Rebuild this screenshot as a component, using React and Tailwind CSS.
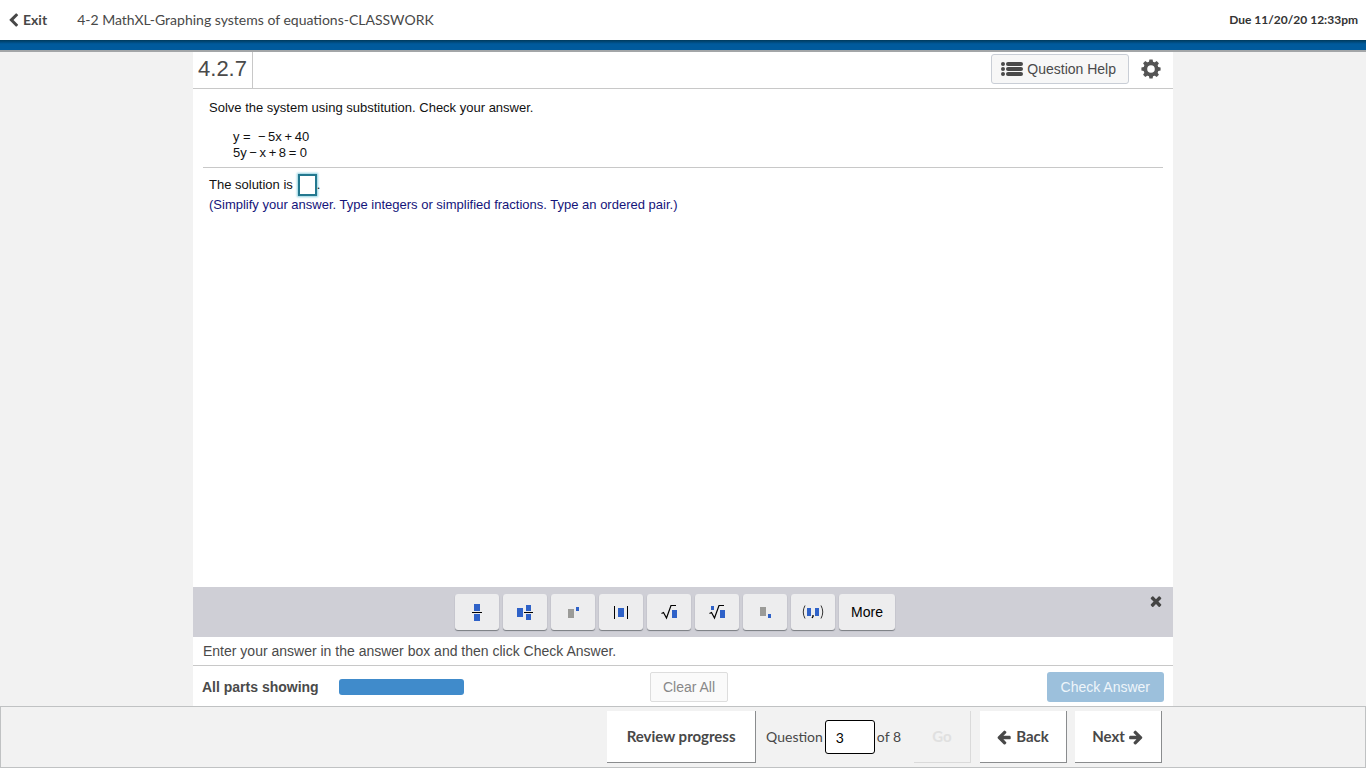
const BLUE = '#2f62c8'
const GREY = '#9b9b98'

const ICON_PATHS = {
  chevronLeft: 'M1427 301l-531 531 531 531q19 19 19 45t-19 45l-166 166q-19 19-45 19t-45-19l-742-742q-19-19-19-45t19-45l742-742q19-19 45-19t45 19l166 166q19 19 19 45t-19 45z',
  arrowLeft: 'M1536 896v128q0 53-32.5 90.5t-84.5 37.5h-704l293 294q38 36 38 90t-38 90l-75 76q-37 37-90 37-52 0-91-37l-651-652q-37-37-37-90 0-52 37-91l651-650q38-38 91-38 52 0 90 38l75 74q38 38 38 91t-38 91l-293 293h704q52 0 84.5 37.5t32.5 90.5z',
  arrowRight: 'M1600 960q0 54-37 91l-651 651q-39 37-91 37-51 0-90-37l-75-75q-38-38-38-91t38-91l293-293h-704q-52 0-84.5-37.5t-32.5-90.5v-128q0-53 32.5-90.5t84.5-37.5h704l-293-294q-38-36-38-90t38-90l75-75q38-38 90-38 53 0 91 38l651 651q37 35 37 90z',
  times: 'M1490 1322q0 40-28 68l-136 136q-28 28-68 28t-68-28l-294-294-294 294q-28 28-68 28t-68-28l-136-136q-28-28-28-68t28-68l294-294-294-294q-28-28-28-68t28-68l136-136q28-28 68-28t68 28l294 294 294-294q28-28 68-28t68 28l136 136q28 28 28 68t-28 68l-294 294 294 294q28 28 28 68z',
}

const Icon = ({ name, className }) => (
  <svg viewBox="0 0 1792 1792" fill="currentColor" className={className} aria-hidden="true">
    <path d={ICON_PATHS[name]} />
  </svg>
)

const ListIcon = () => (
  <svg viewBox="0 0 22 16" className="w-[22px] h-4" fill="currentColor" aria-hidden="true">
    {[1, 6, 11].map((y) => (
      <g key={y}>
        <circle cx="2" cy={y + 2} r="2" />
        <rect x="5" y={y} width="17" height="4" rx="2" />
      </g>
    ))}
  </svg>
)

const GearIcon = () => (
  <svg viewBox="0 0 20 20" className="w-5 h-5" aria-hidden="true">
    <circle cx="10" cy="10" r="5.7" fill="none" stroke="currentColor" strokeWidth="3.8" />
    {[0, 45, 90, 135, 180, 225, 270, 315].map((angle) => (
      <path key={angle} d="M7.8 3.8L8.4 0.4H11.6L12.2 3.8Z" fill="currentColor" transform={`rotate(${angle} 10 10)`} />
    ))}
  </svg>
)

const MATH_TOOLS = [
  {
    label: 'Fraction',
    art: (
      <>
        <rect x="9" y="4" width="6" height="7" fill={BLUE} />
        <rect x="9" y="14" width="6" height="7" fill={BLUE} />
        <path d="M7 12.5H17" stroke="#000" />
      </>
    ),
  },
  {
    label: 'Mixed number',
    art: (
      <>
        <rect x="4" y="8" width="6" height="9" fill={BLUE} />
        <rect x="13" y="5" width="5" height="6" fill={BLUE} />
        <rect x="13" y="14" width="5" height="6" fill={BLUE} />
        <path d="M11 12.5H20" stroke="#000" />
      </>
    ),
  },
  {
    label: 'Exponent',
    art: (
      <>
        <rect x="7" y="9" width="6" height="9" fill={GREY} />
        <rect x="15" y="7" width="3" height="4" fill={BLUE} />
      </>
    ),
  },
  {
    label: 'Absolute value',
    art: (
      <>
        <rect x="9" y="8" width="6" height="9" fill={BLUE} />
        <path d="M5.5 6V19M18.5 6V19" stroke="#000" />
      </>
    ),
  },
  {
    label: 'Square root',
    art: (
      <>
        <rect x="15" y="10" width="5" height="8" fill={BLUE} />
        <path d="M4.5 13.5L6.5 12.5L9.5 18L14 5.5H19" stroke="#000" strokeWidth="1.2" fill="none" />
      </>
    ),
  },
  {
    label: 'Nth root',
    art: (
      <>
        <rect x="6" y="6" width="3" height="4" fill={BLUE} />
        <rect x="15" y="10" width="5" height="8" fill={BLUE} />
        <path d="M4.5 13.5L6.5 12.5L9.5 18L14 5.5H19" stroke="#000" strokeWidth="1.2" fill="none" />
      </>
    ),
  },
  {
    label: 'Subscript',
    art: (
      <>
        <rect x="7" y="7" width="6" height="9" fill={GREY} />
        <rect x="15" y="14" width="3" height="4" fill={BLUE} />
      </>
    ),
  },
  {
    label: 'Ordered pair',
    art: (
      <>
        <rect x="6" y="8" width="4" height="8" fill={BLUE} />
        <rect x="14" y="8" width="4" height="8" fill={BLUE} />
        <path d="M4 5.5Q0.5 12 4 18.5M20 5.5Q23.5 12 20 18.5" stroke="#333" fill="none" />
        <path d="M12 15V16.5L11 18" stroke="#000" strokeWidth="1.3" fill="none" />
      </>
    ),
  },
]

const toolButton =
  'h-9 flex items-center justify-center rounded-[3px] bg-[#ededee] text-black shadow-[0_1px_1px_#777a80]'

const navButton =
  'h-[52px] flex items-center justify-center bg-white border-r border-b border-[#8a8c8e] text-[15px] font-bold text-[#484848]'

const Header = () => (
  <header>
    <div className="h-10 flex items-center bg-white pl-[6px] pr-2 text-[#484848]">
      <a href="#exit" className="flex items-center gap-[2px] text-sm font-bold">
        <Icon name="chevronLeft" className="w-[15px] h-[15px]" />
        Exit
      </a>
      <h1 className="ml-[30px] text-sm">4-2 MathXL-Graphing systems of equations-CLASSWORK</h1>
      <p className="ml-auto text-xs font-bold text-[#333]">Due 11/20/20 12:33pm</p>
    </div>
    <div className="h-3 bg-linear-to-b from-[#003a5c] via-[#005a9c] via-40% to-[#005a9c] border-b-2 border-[#a3a6a8]" />
  </header>
)

const QuestionBar = () => (
  <div className="h-[37px] flex items-stretch border-b border-[#c8c8c8] text-[#4a4a4a]">
    <h2 className="w-[60px] flex items-center justify-center pb-[2px] border-r border-[#c8c8c8] text-[22px] leading-6">
      4.2.7
    </h2>
    <div className="ml-auto flex items-center gap-3 pb-[2px] pr-3">
      <button className="h-[30px] flex items-center gap-1 pl-[9px] pr-3 rounded-[3px] border border-[#c9ced6] bg-[#f7f7f7] text-sm">
        <ListIcon />
        Question Help
      </button>
      <button aria-label="Settings" className="text-[#555]">
        <GearIcon />
      </button>
    </div>
  </div>
)

const Exercise = () => (
  <section className="flex-1 text-[13px] leading-4 text-[#111]">
    <div className="mx-[10px] px-[6px] pt-[11px] pb-[6px] border-b border-[#c8c8c8]">
      <p>Solve the system using substitution. Check your answer.</p>
      <p className="mt-[13px] ml-6">
        y&nbsp;=&nbsp; −&thinsp;5x&thinsp;+&thinsp;40
        <br />
        5y&thinsp;−&thinsp;x&thinsp;+&thinsp;8&thinsp;=&nbsp;0
      </p>
    </div>
    <div className="px-4 pt-[6px]">
      <div className="flex items-center">
        <label htmlFor="solution">The solution is</label>
        <input
          id="solution"
          className="ml-[5px] w-[19px] h-[22px] border-2 border-[#23788f] bg-white outline-none shadow-[0_0_2px_1px_#8fd0e0]"
        />
        .
      </div>
      <p className="mt-[1px] text-[#14147a]">
        (Simplify your answer. Type integers or simplified fractions. Type an ordered pair.)
      </p>
    </div>
  </section>
)

const MathPalette = () => (
  <div className="relative h-[50px] flex items-center justify-center gap-1 pr-4 bg-[#cfcfd6]">
    {MATH_TOOLS.map((tool) => (
      <button key={tool.label} aria-label={tool.label} className={`${toolButton} w-11`}>
        <svg viewBox="0 0 24 24" className="w-6 h-6" aria-hidden="true">
          {tool.art}
        </svg>
      </button>
    ))}
    <button className={`${toolButton} px-3 text-sm`}>More</button>
    <button aria-label="Close palette" className="absolute top-[6px] right-[9px] text-[#444]">
      <Icon name="times" className="w-4 h-4" />
    </button>
  </div>
)

const AnswerBar = () => (
  <div className="text-sm text-[#4a4a4a]">
    <p className="h-[29px] flex items-center px-[10px] border-b border-[#c8c8c8]">
      Enter your answer in the answer box and then click Check Answer.
    </p>
    <div className="h-10 grid grid-cols-[1fr_auto_1fr] items-center pt-[2px] px-[9px]">
      <div className="flex items-center gap-5">
        <span className="font-bold">All parts showing</span>
        <div className="w-[125px] h-4 rounded-[3px] bg-[#408bcb]" />
      </div>
      <button className="ml-3 h-[30px] px-3 rounded-[2px] border border-[#ddd] bg-[#fafafa] text-[#888]">
        Clear All
      </button>
      <button className="h-[30px] px-[14px] justify-self-end rounded-[3px] bg-[#9cc0dc] text-[#eef5fa]">
        Check Answer
      </button>
    </div>
  </div>
)

const Footer = () => (
  <footer className="h-[62px] bg-[#f2f2f2] border border-[#c0c2c3] text-[#484848]">
    <div className="max-w-[980px] h-full mx-auto flex items-center justify-end pr-[11px]">
      <button className={`${navButton} w-[149px]`}>Review progress</button>
      <label htmlFor="question" className="ml-[10px] text-sm">
        Question
      </label>
      <input
        id="question"
        defaultValue="3"
        className="mx-[2px] w-[50px] h-[34px] px-[10px] rounded-[3px] border border-black bg-white text-sm text-black"
      />
      <span className="text-sm">of 8</span>
      <button disabled className="ml-[13px] w-[57px] h-[52px] border-r border-b border-[#dadada] text-[15px] font-bold text-[#e0e0e0]">
        Go
      </button>
      <button className={`${navButton} ml-[9px] w-[87px] gap-[3px]`}>
        <Icon name="arrowLeft" className="w-4 h-4" />
        Back
      </button>
      <button className={`${navButton} ml-2 w-[87px] gap-[3px]`}>
        Next
        <Icon name="arrowRight" className="w-4 h-4" />
      </button>
    </div>
  </footer>
)

const App = () => (
  <div className="min-h-screen flex flex-col bg-[#f2f2f2] font-['Lato',sans-serif]">
    <Header />
    <main className="flex-1 w-full max-w-[980px] mx-auto flex flex-col bg-white font-['Liberation_Sans',Arial,sans-serif]">
      <QuestionBar />
      <Exercise />
      <MathPalette />
      <AnswerBar />
    </main>
    <Footer />
  </div>
)

export default App
